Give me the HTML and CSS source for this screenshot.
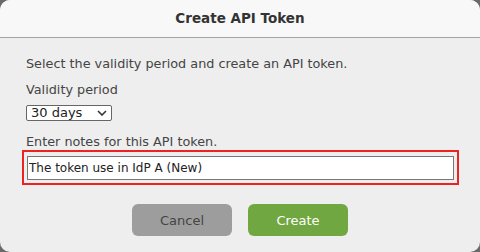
FILE: index.html
```html
<!DOCTYPE html>
<html>
<head>
<meta charset="utf-8">
<link rel="stylesheet" href="styles.css">
</head>
<body>
<div class="dialog">
  <div class="header">Create API Token</div>
  <div class="content">
    <p class="intro">Select the validity period and create an API token.</p>
    <label class="label">Validity period</label>
    <span class="select-wrap">
      <select class="select"><option>30 days</option><option>60 days</option><option>90 days</option></select>
      <svg class="chev" width="10" height="6" viewBox="0 0 10 6"><path d="M1 1 L5 5 L9 1" fill="none" stroke="#333" stroke-width="1.6"/></svg>
    </span>
    <label class="label notes-label">Enter notes for this API token.</label>
    <div class="highlight">
      <input class="input" type="text" value="The token use in IdP A (New)">
    </div>
    <div class="actions">
      <button class="btn cancel">Cancel</button>
      <button class="btn create">Create</button>
    </div>
  </div>
</div>
</body>
</html>
```
FILE: styles.css
```css
html, body {
  margin: 0;
  padding: 0;
  background: #6a6a6a;
}
.dialog {
  width: 480px;
  height: 252px;
  background: #eeeeee;
  border-radius: 10px;
  overflow: hidden;
  font-family: "DejaVu Sans", "Liberation Sans", sans-serif;
  color: #444;
}
.header {
  height: 37px;
  line-height: 37px;
  background: #f8f8f8;
  border-bottom: 1px solid #a4a4a4;
  text-align: center;
  font-weight: bold;
  font-size: 13.5px;
  color: #333;
}
.content {
  padding: 18px 26px 0 26px;
  display: flex;
  flex-direction: column;
  align-items: flex-start;
}
.intro {
  margin: 0;
  font-size: 12.8px;
  line-height: 16px;
}
.label {
  display: block;
  margin-top: 10px;
  font-size: 12.8px;
  line-height: 16px;
}
.select-wrap {
  margin-top: 7px;
  display: inline-flex;
  align-items: center;
  width: 84px;
  height: 14px;
  border: 1px solid #666;
  border-radius: 2px;
  background: #fff;
}
.select {
  appearance: none;
  -webkit-appearance: none;
  border: none;
  background: transparent;
  font-family: "DejaVu Sans", "Liberation Sans", sans-serif;
  font-size: 13px;
  color: #222;
  padding: 0 0 0 4px;
  margin: 0;
  height: 14px;
  line-height: 14px;
  width: 68px;
  outline: none;
}
.chev {
  margin-left: 2px;
}
.notes-label {
  margin-top: 13px;
}
.highlight {
  margin-left: -4px;
  width: 427px;
  border: 2px solid #ee2222;
  padding: 4px 3px 3px 3px;
}
.input {
  box-sizing: border-box;
  display: block;
  width: 427px;
  height: 24px;
  border: 1px solid #777;
  background: #fff;
  padding: 0 1px;
  margin: 0;
  font-family: "DejaVu Sans", "Liberation Sans", sans-serif;
  font-size: 12px;
  color: #222;
  outline: none;
}
.actions {
  align-self: stretch;
  margin-left: -26px;
  margin-right: -26px;
  margin-top: 19px;
  display: flex;
  justify-content: center;
  gap: 16px;
}
.btn {
  width: 100px;
  height: 32px;
  border: none;
  border-radius: 6px;
  font-family: "DejaVu Sans", "Liberation Sans", sans-serif;
  font-size: 13px;
  padding: 0;
}
.cancel {
  background: #9d9d9d;
  color: #444;
}
.create {
  background: #70a741;
  color: #fff;
}
```
